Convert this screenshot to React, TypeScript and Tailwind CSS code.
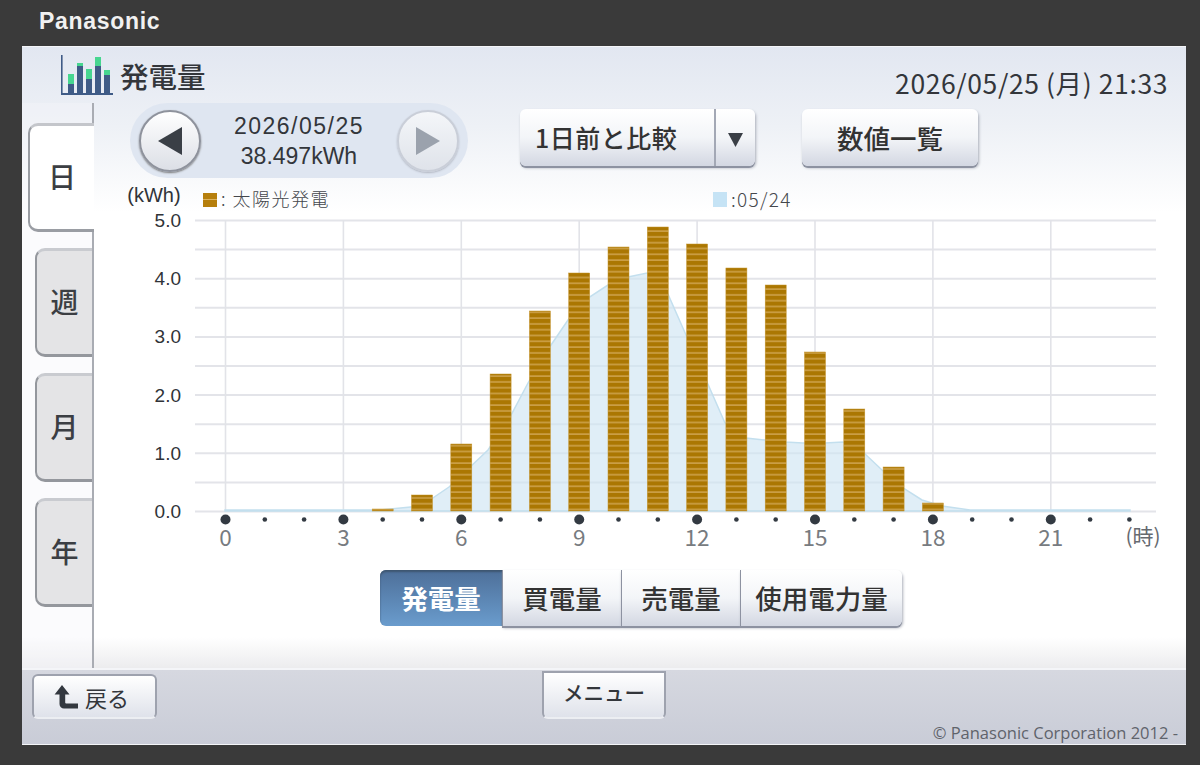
const bars: [number, number][] = [
  [4, 509], [5, 495], [6, 444], [7, 374], [8, 311], [9, 273], [10, 247], [11, 227],
  [12, 244], [13, 268], [14, 285], [15, 352], [16, 409], [17, 467], [18, 503],
]

const area: [number, number][] = [
  [225, 510], [380, 510], [421, 506], [449, 487], [488, 450], [510, 417], [528, 383], [549, 348],
  [568, 320], [588, 298], [608, 285], [628, 277], [647, 273], [667, 292], [686, 335], [707, 382],
  [725, 423], [746, 438], [765, 440], [785, 442], [803, 443], [825, 443], [843, 442], [863, 452],
  [882, 470], [903, 488], [922, 500], [942, 506], [970, 510], [1130, 510], [1130, 511], [225, 511],
]

const hourX = (h: number) => 225.5 + h * 39.3

function Chart() {
  return (
    <svg viewBox="94 180 1092 380" className="block h-[380px] w-[1092px]">
      <defs>
        <pattern id="stripe" width="20" height="5.8" patternUnits="userSpaceOnUse">
          <rect width="20" height="5.8" fill="#ab7702" />
          <rect width="20" height="1.2" y="4.3" fill="#d8b062" />
        </pattern>
      </defs>
      {[...Array(11).keys()].map((i) => (
        <line key={i} x1="195" x2="1156" y1={220.5 + i * 29.1} y2={220.5 + i * 29.1} stroke="#e3e4e9" strokeWidth="2" />
      ))}
      {[0, 3, 6, 9, 12, 15, 18, 21].map((h) => (
        <line key={h} x1={hourX(h)} x2={hourX(h)} y1="220" y2="511" stroke="#e2e3e8" strokeWidth="1.6" />
      ))}
      <polygon points={area.map((p) => p.join(",")).join(" ")} fill="#cfe5f3" fillOpacity="0.65" stroke="#c3dfee" strokeWidth="1.5" />
      {bars.map(([h, top]) => (
        <rect key={h} x={hourX(h) - 10.5} y={top} width="21" height={511 - top} fill="url(#stripe)" stroke="#c4922a" strokeWidth="0.5" />
      ))}
      {[...Array(24).keys()].map((h) => (
        <circle key={h} cx={hourX(h)} cy="519.5" r={h % 3 === 0 ? 5 : 2.3} fill="#333a42" />
      ))}
      {[0, 3, 6, 9, 12, 15, 18, 21].map((h) => (
        <text key={h} x={hourX(h)} y="546" textAnchor="middle" fontSize="22.5" fill="#777b80">
          {h}
        </text>
      ))}
      <text x="1143" y="544" textAnchor="middle" fontSize="21" fill="#666a70">(時)</text>
      {["5.0", "4.0", "3.0", "2.0", "1.0", "0.0"].map((v, i) => (
        <text key={v} x="181" y={227 + i * 58.2} textAnchor="end" fontSize="19" fill="#303338" className="font-['Liberation_Sans',sans-serif]">
          {v}
        </text>
      ))}
      <text x="154" y="202" textAnchor="middle" fontSize="20" fill="#303338" className="font-['Liberation_Sans',sans-serif]">(kWh)</text>
      <rect x="203" y="193" width="14" height="14" fill="#b67f0c" />
      <rect x="203" y="199" width="14" height="1" fill="#dcb35f" />
      <text x="221" y="206" fontSize="18" fontWeight="300" fill="#44474c" letterSpacing="1.5">: 太陽光発電</text>
      <rect x="713" y="192" width="14" height="15" fill="#c5e3f5" />
      <text x="731" y="207" fontSize="19" fontWeight="300" fill="#44474c" letterSpacing="1.3">:05/24</text>
    </svg>
  )
}

function LogoIcon() {
  const cols = [
    { x: 68, green: 76, navy: 86 },
    { x: 77, green: 65, navy: 68 },
    { x: 86, green: 71, navy: 81 },
    { x: 95, green: 59, navy: 68 },
    { x: 104, green: 72, navy: 77 },
  ]
  return (
    <svg viewBox="58 55 58 44" className="h-[44px] w-[58px] shrink-0">
      <rect x="61" y="57" width="1.6" height="40" fill="#3f5b86" />
      <rect x="61" y="95" width="52" height="2" fill="#3f5b86" />
      {cols.map((c) => (
        <g key={c.x}>
          <rect x={c.x} y={c.green} width="6" height={c.navy - c.green} fill="#47d690" />
          <rect x={c.x} y={c.navy} width="6" height={95 - c.navy} fill="#3f5b86" />
        </g>
      ))}
    </svg>
  )
}

function RoundButton({ dir, muted }: { dir: "left" | "right"; muted?: boolean }) {
  return (
    <button
      className={
        muted
          ? "flex h-[62px] w-[62px] items-center justify-center rounded-full border-2 border-[#c9ced8] bg-linear-to-b from-[#f4f6f9] to-[#dfe3ea] shadow-[0_1px_2px_#b0b5c0]"
          : "flex h-[62px] w-[62px] items-center justify-center rounded-full border-2 border-[#8e929c] bg-linear-to-b from-white to-[#dcdfe6] shadow-[0_1px_2px_#777]"
      }
    >
      <svg width="24" height="28" viewBox="0 0 24 28">
        <polygon
          points={dir === "left" ? "24,0 24,28 0,14" : "0,0 0,28 24,14"}
          fill={muted ? "#9ba2ad" : "#3a3f46"}
        />
      </svg>
    </button>
  )
}

const raised =
  "bg-linear-to-b from-white via-[#f3f5f8] to-[#d3d7e2] text-[#333] shadow-[0_2px_0_#8d92a1,1px_2px_3px_#a9adb8]"

const segments = [
  { label: "買電量", w: "w-[119px]" },
  { label: "売電量", w: "w-[119px]" },
  { label: "使用電力量", w: "w-[162px] rounded-r-md" },
]

export default function App() {
  return (
    <div className="flex h-[765px] w-[1200px] flex-col overflow-hidden bg-[#3a3a3a] font-['Noto_Sans_CJK_JP','Noto_Sans',sans-serif]">
      <div className="flex h-[46px] shrink-0 items-center pb-[3px] pl-[39px] font-['Liberation_Sans',sans-serif] text-[23px] font-bold tracking-[0.7px] text-[#f1f1f1]">
        Panasonic
      </div>

      <div className="ml-[22px] flex h-[699px] w-[1164px] flex-col border-y border-[#f4f5f8] bg-[linear-gradient(180deg,#e2e7f1_0,#eef1f6_80px,#fff_165px,#fff_590px,#ececee_621px)]">
        <div className="flex h-[56px] shrink-0 items-center justify-between pl-[36px] pr-[18px]">
          <div className="flex items-center">
            <LogoIcon />
            <span className="mt-[3px] ml-[4px] text-[28.5px] font-medium leading-none text-[#33363b]">発電量</span>
          </div>
          <span className="mt-[16px] text-[26.5px] leading-none tracking-[0.6px] text-[#33363b]">2026/05/25 (月) 21:33</span>
        </div>

        <div className="flex min-h-0 flex-1">
          <div className="flex w-[72px] shrink-0 flex-col items-end border-r-2 border-[#a9acb3] bg-[#f4f6fa]/40 pt-[20px]">
            <div className="relative -mr-[2px] flex h-[109px] w-[66px] items-center justify-center rounded-l-[10px] border-y-[3px] border-l-2 border-[#9a9da3] border-t-[#c4c6cb] bg-white pb-[4px] text-[28px] font-medium text-[#3b3e43]">
              日
            </div>
            {["週", "月", "年"].map((t) => (
              <div
                key={t}
                className="mt-[16px] flex h-[109px] w-[57px] items-center justify-center rounded-l-[10px] border-y-[3px] border-l-2 border-[#94979d] border-t-[#c9cbd0] bg-[#e4e4e6] pb-[4px] text-[28px] font-medium text-[#3b3e43]"
              >
                {t}
              </div>
            ))}
          </div>

          <div className="flex min-w-0 flex-1 flex-col">
            <div className="ml-[36px] flex h-[75px] shrink-0 items-start">
              <div className="flex h-[75px] w-[338px] items-center justify-between rounded-full bg-[#dfe6f1] px-[9px]">
                <RoundButton dir="left" />
                <div className="text-center font-['Liberation_Sans',sans-serif] text-[23px] leading-[30px] text-[#33363b]">
                  <div className="tracking-[1.5px]">2026/05/25</div>
                  <div>38.497kWh</div>
                </div>
                <RoundButton dir="right" muted />
              </div>
              <div className={`ml-[52px] mt-[6px] flex h-[57px] w-[235px] rounded-md ${raised}`}>
                <div className="flex flex-1 items-center pl-[15px] text-[25px] font-medium tracking-[0.5px]">1日前と比較</div>
                <div className="flex w-[41px] items-center justify-center border-l-2 border-[#a3a8b5] pt-[5px]">
                  <svg width="15" height="14" viewBox="0 0 15 14">
                    <polygon points="0,0 15,0 7.5,14" fill="#3a3f46" />
                  </svg>
                </div>
              </div>
              <div className={`ml-[47px] mt-[6px] flex h-[57px] w-[176px] items-center justify-center rounded-md text-[26.5px] font-medium ${raised}`}>
                数値一覧
              </div>
            </div>

            <div className="mt-[2px]">
              <Chart />
            </div>

            <div className="ml-[286px] mt-[10px] flex h-[56px] w-[522px] text-[26.5px] font-medium">
              <div className="flex w-[122px] items-center justify-center rounded-l-md bg-linear-to-b from-[#4d6f99] to-[#6a9ccd] font-bold text-white shadow-[inset_0_2px_2px_#3e5670]">
                発電量
              </div>
              {segments.map((s) => (
                <div key={s.label} className={`flex items-center justify-center border-l border-[#8d92a1] ${s.w} ${raised}`}>
                  {s.label}
                </div>
              ))}
            </div>
          </div>
        </div>

        <div className="flex h-[76px] shrink-0 border-t-2 border-[#f4f5f8] bg-linear-to-b from-[#d6d8e0] to-[#c9ccd7] pl-[10px]">
          <button className="mt-[4px] flex h-[45px] w-[125px] items-center justify-center gap-[7px] rounded-[6px] border-2 border-[#9ea2ae] border-b-[#eceef2] bg-linear-to-b from-white to-[#dfe2ea] pr-[6px] text-[22px] leading-none text-[#33363b]">
            <svg width="24" height="24" viewBox="0 0 24 24">
              <path d="M8 0 15.5 9.5H11.2V17.5a1 1 0 0 0 1 1H24V23.5H10a4.5 4.5 0 0 1-4.5-4.5V9.5H.6Z" fill="#33383f" />
            </svg>
            戻る
          </button>
          <button className="ml-[385px] mt-[1px] flex h-[48px] w-[124px] items-center justify-center rounded-b-[6px] border-2 border-[#9ea2ae] border-b-[#eceef2] bg-linear-to-b from-white to-[#dfe2ea] pb-[5px] text-[20.5px] font-medium leading-none text-[#33363b]">
            メニュー
          </button>
          <span className="mb-[1px] ml-auto self-end pr-[8px] font-['Open_Sans',sans-serif] text-[16.5px] leading-[20px] text-[#5f636b]">
            © Panasonic Corporation 2012 -
          </span>
        </div>
      </div>
    </div>
  )
}
